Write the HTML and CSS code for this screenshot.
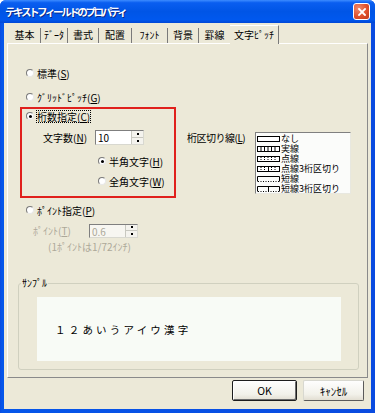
FILE: index.html
```html
<!DOCTYPE html>
<html lang="ja">
<head>
    <meta charset="UTF-8">
    <title>テキストフィールドのプロパティ</title>
    <link rel="stylesheet" href="styles.css">
</head>
<body>
    <div class="window">
        <div class="titlebar">
            <span class="title">テキストフィールドのプロパティ</span>
            <span class="close">
                <svg width="8" height="8" viewBox="0 0 8 8"><path d="M1 1L7 7M7 1L1 7" stroke="#fff" stroke-width="1.8" stroke-linecap="square"/></svg>
            </span>
        </div>
        <div class="frame">
            <div class="client">
                <!-- タブ -->
                <div class="tabs">
                    <span class="tab w32">基本</span>
                    <span class="tab w27">ﾃﾞｰﾀ</span>
                    <span class="tab w31">書式</span>
                    <span class="tab w33">配置</span>
                    <span class="tab w36">ﾌｫﾝﾄ</span>
                    <span class="tab w31">背景</span>
                    <span class="tab w31 nobar">罫線</span>
                    <span class="tab active">文字ﾋﾟｯﾁ</span>
                </div>

                <div class="panel">
                    <div class="top">
                        <div class="left">
                            <div class="opt out"><i class="radio"></i><span>標準(<u>S</u>)</span></div>
                            <div class="opt out gap12"><i class="radio"></i><span>ｸﾞﾘｯﾄﾞﾋﾟｯﾁ(<u>G</u>)</span></div>

                            <div class="redbox">
                                <div class="opt"><i class="radio on"></i><span class="focus">桁数指定(<u>C</u>)</span></div>
                                <div class="field count">
                                    <span class="field-label">文字数(<u>N</u>)</span>
                                    <div class="spin">
                                        <span class="spin-val">10</span>
                                        <span class="spin-btns"><i class="arr up"></i><i class="arr down"></i></span>
                                    </div>
                                </div>
                                <div class="opt sub hankaku"><i class="radio on"></i><span>半角文字(<u>H</u>)</span></div>
                                <div class="opt sub zenkaku"><i class="radio"></i><span>全角文字(<u>W</u>)</span></div>
                            </div>

                            <div class="opt out point"><i class="radio"></i><span>ﾎﾟｲﾝﾄ指定(<u>P</u>)</span></div>
                            <div class="field disabled pt">
                                <span class="field-label pt-label">ﾎﾟｲﾝﾄ(<u>T</u>)</span>
                                <div class="spin">
                                    <span class="spin-val">0.6</span>
                                    <span class="spin-btns"><i class="arr up"></i><i class="arr down"></i></span>
                                </div>
                            </div>
                            <div class="note">(1ﾎﾟｲﾝﾄは1/72ｲﾝﾁ)</div>
                        </div>

                        <div class="right">
                            <span class="list-label">桁区切り線(<u>L</u>)</span>
                            <div class="listbox">
                                <div class="item">
                                    <svg width="23" height="6"><rect x="0.5" y="0.5" width="22" height="5" fill="#fff" stroke="#000"/></svg>なし
                                </div>
                                <div class="item">
                                    <svg width="23" height="6"><rect x="0.5" y="0.5" width="22" height="5" fill="#fff" stroke="#000"/><path d="M4 1V5M7.5 1V5M11 1V5M14.5 1V5M18 1V5" stroke="#000"/></svg>実線
                                </div>
                                <div class="item">
                                    <svg width="23" height="6"><rect x="0.5" y="0.5" width="22" height="5" fill="#fff" stroke="#000"/><path d="M4 1V5M7.5 1V5M11 1V5M14.5 1V5M18 1V5" stroke="#000" stroke-dasharray="1 1"/></svg>点線
                                </div>
                                <div class="item">
                                    <svg width="23" height="6"><rect x="0.5" y="0.5" width="22" height="5" fill="#fff" stroke="#000"/><path d="M4 1V5M7.5 1V5M11.5 1V5M14.5 1V5M18 1V5" stroke="#000" stroke-dasharray="1 1"/><path d="M11.5 1V5" stroke="#000"/></svg>点線3桁区切り
                                </div>
                                <div class="item">
                                    <svg width="23" height="6"><path d="M0.5 0.5H22.5M0.5 0.5V5.5M22.5 0.5V5.5" stroke="#000" fill="none"/><path d="M1 5.5H22" stroke="#000" stroke-dasharray="1 1.5"/></svg>短線
                                </div>
                                <div class="item">
                                    <svg width="23" height="6"><path d="M0.5 0.5H22.5M0.5 0.5V5.5M22.5 0.5V5.5M11.5 0.5V5.5" stroke="#000" fill="none"/><path d="M1 5.5H22" stroke="#000" stroke-dasharray="1 1.5"/></svg>短線3桁区切り
                                </div>
                            </div>
                        </div>
                    </div>

                    <fieldset class="sample">
                        <legend>ｻﾝﾌﾟﾙ</legend>
                        <div class="sample-box">１２あいうアイウ漢字</div>
                    </fieldset>
                </div>

                <div class="buttons">
                    <button class="btn default">OK</button>
                    <button class="btn cancel">ｷｬﾝｾﾙ</button>
                </div>
            </div>
        </div>
    </div>
</body>
</html>
```

FILE: styles.css
```css
body {
    margin: 0;
    background: #fff;
    font-family: "Noto Sans CJK JP", "Liberation Sans", sans-serif;
    font-size: 10px;
    color: #000;
}
.window {
    width: 375px;
    height: 413px;
    display: flex;
    flex-direction: column;
    background: #0a4fe0;
    border-radius: 6px 6px 0 0;
    overflow: hidden;
}
.titlebar {
    height: 23px;
    flex: none;
    display: flex;
    align-items: center;
    justify-content: space-between;
    padding: 0 5px 0 5px;
    background: linear-gradient(#3d8cff 0%, #0a5ef0 12%, #0055e6 50%, #0058ee 85%, #0047d6 100%);
}
.title {
    color: #fff;
    font-size: 10.5px;
    font-weight: bold;
    letter-spacing: -2.4px;
    text-shadow: 1px 1px 0 #0a2a8a;
}
.close {
    width: 15px;
    height: 15px;
    border: 1px solid #fff;
    border-radius: 3px;
    display: flex;
    align-items: center;
    justify-content: center;
    background: radial-gradient(circle at 30% 30%, #f08a6c, #e0512c 55%, #c0391a);
}
.frame {
    flex: 1;
    display: flex;
    padding: 0 4px 4px 4px;
    background: linear-gradient(90deg, #0a4be0, #0556ea 2px, #0a4be0);
}
.client {
    flex: 1;
    display: flex;
    flex-direction: column;
    background: #ece9d8;
    padding: 2px 3px 0 3px;
}

/* タブ */
.tabs {
    display: flex;
    align-items: flex-end;
    height: 18px;
    padding-left: 2px;
}
.tab {
    box-sizing: border-box;
    height: 15px;
    line-height: 14px;
    text-align: center;
    border-right: 1px solid #7a7a7a;
}
.tab.nobar {
    border-right: none;
}
.w27 { width: 27px; }
.w31 { width: 31px; }
.w32 { width: 32px; }
.w33 { width: 33px; }
.w36 { width: 36px; }
.tab.active {
    width: 49px;
    height: 19px;
    line-height: 18px;
    margin-bottom: -1px;
    background: #ece9d8;
    border-top: 1px solid #fff;
    border-right: 1px solid #7a7a7a;
    position: relative;
    z-index: 1;
}

.panel {
    height: 335px;
    box-sizing: border-box;
    border: 1px solid;
    border-color: #fff #8a8a8a #8a8a8a #fff;
    display: flex;
    flex-direction: column;
}
.top {
    display: flex;
}
.left {
    width: 172px;
    padding: 23px 0 0 12px;
    box-sizing: border-box;
}
.opt {
    display: flex;
    align-items: center;
    height: 12px;
    gap: 2px;
}
.opt.out {
    margin-left: 6px;
}
.gap12 {
    margin-top: 12px;
}
.radio {
    width: 6px;
    height: 6px;
    border-radius: 50%;
    border: 1px solid;
    border-color: #7a7a7a #e8e8e8 #e8e8e8 #7a7a7a;
    background: #fff;
    display: flex;
    align-items: center;
    justify-content: center;
    margin-right: 1px;
}
.radio.on::after {
    content: "";
    width: 3px;
    height: 3px;
    border-radius: 50%;
    background: #000;
}
.focus {
    outline: 1px dotted #000;
    line-height: 11px;
}

.redbox {
    margin-top: 4px;
    width: 156px;
    box-sizing: border-box;
    border: 2px solid #e0201c;
    padding: 1px 0 9px 4px;
}
.field {
    display: flex;
    align-items: center;
}
.field-label {
    width: 52px;
    margin-left: 17px;
}
.count {
    margin-top: 8px;
}
.spin {
    width: 49px;
    height: 15px;
    box-sizing: border-box;
    border: 1px solid;
    border-color: #7f7f7f #d8d8d0 #d8d8d0 #7f7f7f;
    background: #fff;
    display: flex;
    justify-content: space-between;
}
.spin-val {
    padding-left: 2px;
    line-height: 13px;
}
.spin-btns {
    width: 11px;
    display: flex;
    flex-direction: column;
    border-left: 1px solid #c8c8c0;
}
.arr {
    flex: 1;
    display: flex;
    align-items: center;
    justify-content: center;
    background: #f4f3ee;
}
.arr.up {
    border-bottom: 1px solid #c8c8c0;
}
.arr::after {
    content: "";
    width: 2px;
    height: 2px;
    background: #000;
}
.opt.sub {
    margin-left: 72px;
}
.hankaku {
    margin-top: 10px;
}
.zenkaku {
    margin-top: 8px;
}
.point {
    margin-top: 6px;
}
.pt {
    margin-top: 7px;
}
.pt .spin {
    height: 14px;
    background: #f7f6f1;
}
.pt-label {
    margin-left: 13px;
    width: 56px;
}
.disabled,
.note {
    color: #aca899;
}
.note {
    margin: 3px 0 0 28px;
    line-height: 12px;
}

.right {
    display: flex;
    align-items: flex-start;
    padding-top: 88px;
}
.list-label {
    width: 68px;
    padding-left: 7px;
    line-height: 12px;
    letter-spacing: -0.5px;
}
.listbox {
    width: 96px;
    height: 62px;
    box-sizing: border-box;
    border: 1px solid;
    border-color: #808080 #e8e8e0 #e8e8e0 #808080;
    background: #fbfcfa;
    padding: 1px 0 0 1px;
}
.item {
    display: flex;
    align-items: center;
    height: 10px;
    line-height: 10px;
    font-size: 9px;
}
.item svg {
    margin-right: 1px;
}

/* サンプル */
.sample {
    margin: 24px 8px 0 10px;
    padding: 0 0 8px 0;
    border: 1px solid #d0d0bf;
    border-radius: 3px;
}
.sample legend {
    margin-left: 2px;
    padding: 0 1px;
    line-height: 12px;
}
.sample-box {
    margin: 8px 17px 0 18px;
    height: 64px;
    background: #f8fbf6;
    display: flex;
    align-items: center;
    padding-left: 18px;
    font-size: 10.5px;
    letter-spacing: 3.2px;
}

.buttons {
    display: flex;
    justify-content: flex-end;
    gap: 6px;
    margin: 2px 4px 0 0;
}
.btn {
    height: 21px;
    font-family: inherit;
    font-size: 10.5px;
    border-radius: 2px;
    background: linear-gradient(#fefefe, #f2f1ea 70%, #e2ded2);
    padding: 0;
}
.btn.default {
    width: 65px;
    border: 1px solid #1d1d1d;
    box-shadow: inset 1px 1px 0 #fff, inset -1px -1px 0 #6c6c6c;
}
.btn.cancel {
    width: 61px;
    font-size: 11px;
    border: 1px solid;
    border-color: #d8d8d0 #5a5a5a #5a5a5a #d8d8d0;
}
```
